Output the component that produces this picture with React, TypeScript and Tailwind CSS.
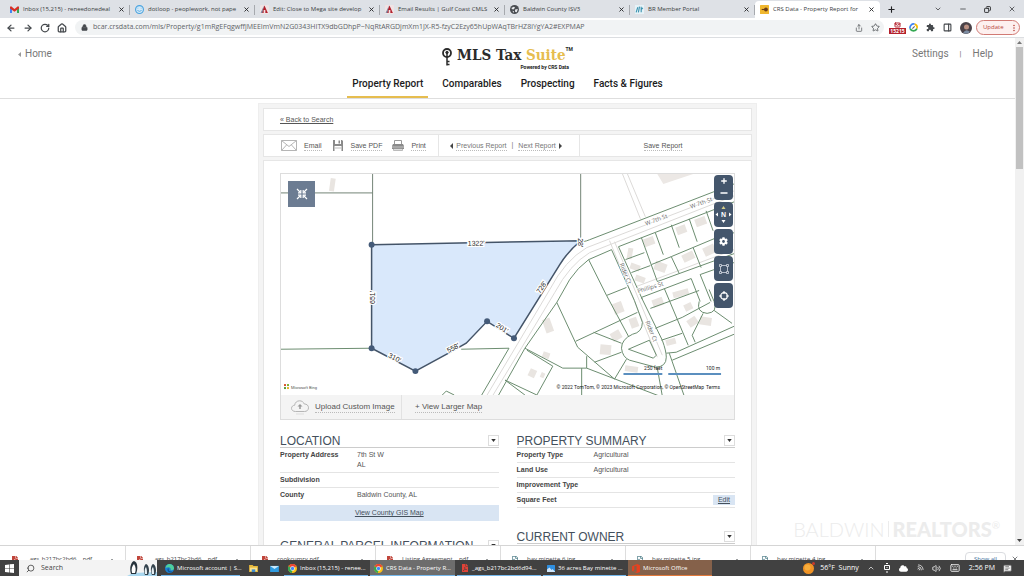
import React from "react";
import {
	ArrowLeft,
	ArrowRight,
	ChevronDown,
	ChevronUp,
	Copy,
	Home,
	Keyboard,
	Lock,
	Mail,
	MessageSquareText,
	Minus,
	PanelRight,
	Plus,
	RotateCw,
	Search,
	Share,
	Star,
	Volume2,
	Wifi,
	X,
} from "lucide-react";
import { FaCloud, FaCog, FaFilePdf, FaRegFileImage } from "react-icons/fa";
import { MdExtension, MdMoreVert } from "react-icons/md";

// ── Types ───────────────────────────────────────────────────────────────────

interface Field {
	label: string;
	lines?: string[];
	edit?: boolean;
}

interface EdgeLabel {
	text: string;
	x: number;
	y: number;
	angle: number;
}

// ── Data ────────────────────────────────────────────────────────────────────

const URL_TEXT =
	"bcar.crsdata.com/mls/Property/g1mRgEFqgwffjMEEImVmN2G0343HITX9dbGDhpP~NqRtARGDjmXm1JX-R5-fzyC2Ezy65hUpWAqTBrHZ8iYgYA2#EXPMAP";

const TABS = [
	{ title: "Inbox (15,215) - reneedonedeal", icon: <GmailIcon /> },
	{ title: "dotloop - peoplework, not pape", icon: <DotloopIcon /> },
	{ title: "Edit: Close to Mega site develop", icon: <MlsIcon /> },
	{ title: "Email Results | Gulf Coast CMLS", icon: <MlsIcon /> },
	{ title: "Baldwin County ISV3", icon: <GlobeIcon /> },
	{ title: "BR Member Portal", icon: <PortalIcon /> },
	{ title: "CRS Data - Property Report for", icon: <CrsIcon />, active: true },
];

const NAV = ["Property Report", "Comparables", "Prospecting", "Facts & Figures"];

const LOCATION: Field[] = [
	{ label: "Property Address", lines: ["7th St W", "AL"] },
	{ label: "Subdivision" },
];

const SUMMARY: Field[] = [
	{ label: "Property Type", lines: ["Agricultural"] },
	{ label: "Land Use", lines: ["Agricultural"] },
	{ label: "Improvement Type" },
	{ label: "Square Feet", edit: true },
];

const DOWNLOADS = [
	{ name: "_ags_b217bc2bd6....pdf", pdf: true },
	{ name: "_ags_b217bc2bd6....pdf", pdf: true },
	{ name: "cookcumry.pdf", pdf: true },
	{ name: "Listing Agreement....pdf", pdf: true },
	{ name: "bay minette 6.jpg", pdf: false },
	{ name: "bay minette 5.jpg", pdf: false },
	{ name: "bay minette 4.jpg", pdf: false },
];

const EDGE_LABELS: EdgeLabel[] = [
	{ text: "1322'", x: 196, y: 70, angle: -1 },
	{ text: "28'", x: 300, y: 69, angle: 90 },
	{ text: "651'", x: 92, y: 124, angle: -90 },
	{ text: "728'", x: 262, y: 114, angle: -57 },
	{ text: "310'", x: 114, y: 185, angle: 27 },
	{ text: "558'", x: 173, y: 175, angle: -28 },
	{ text: "201'", x: 222, y: 155, angle: 32 },
];

const STREET_LABELS: EdgeLabel[] = [
	{ text: "W 7th St", x: 377, y: 46, angle: -20 },
	{ text: "W 7th St", x: 422, y: 29, angle: -20 },
	{ text: "Rider Ct", x: 346, y: 100, angle: 68 },
	{ text: "Phillips St", x: 371, y: 114, angle: -17 },
	{ text: "Rider Ct", x: 372, y: 158, angle: 68 },
];

// corner x, corner y, width, height, angle
const BUILDINGS: number[][] = [
	[50, 4, 5, 13, 8],
	[363, 66, 11, 8, -20],
	[396, 54, 10, 8, -20],
	[415, 46, 11, 8, -20],
	[352, 89, 10, 6, 20],
	[349, 74, 5, 11, 10],
	[377, 87, 12, 9, 20],
	[402, 82, 12, 8, -25],
	[423, 75, 12, 9, -25],
	[357, 101, 10, 6, 20],
	[332, 131, 10, 11, -20],
	[349, 146, 8, 10, -20],
	[330, 161, 10, 9, -30],
	[321, 171, 11, 10, 5],
	[262, 147, 8, 14, -20],
	[264, 178, 7, 6, 20],
	[251, 195, 7, 8, 25],
	[262, 199, 4, 5, 25],
	[393, 119, 16, 6, -15],
	[372, 127, 11, 8, -20],
	[404, 132, 8, 7, -25],
	[407, 148, 10, 8, -35],
	[421, 143, 12, 8, 8],
	[386, 167, 10, 6, -15],
	[346, 192, 13, 6, 8],
];

const LOT_LINES = [
	"M301 67 Q303 69 310 66 L455 10",
	"M0 176 L91 175 M181 176 L229 175 L201 223",
	"M161 223 L166 218 L174 222",
	// main road, east side
	"M332 76 L309 86 Q298 94 290 106 L277 129 L245 175 L218 223",
	"M332 76 L355 127 M309 86 L327 122 L347 114 M327 122 L349 163",
	"M277 129 L298 174 L335 206 M296 168 L358 139",
	"M339 73 L455 28 M339 73 L363 126 M362 64 L378 108 M346 86 L365 79",
	"M352 99 L371 92 M376 59 L384 81 M392 51 L400 74 M410 45 L418 68 M427 37 L434 57",
	"M372 91 L392 83 L435 65 L455 59 M392 83 L400 100 M414 74 L422 94",
	"M378 108 L455 80",
	"M362 124 L412 105 L421 128 M385 115 L409 172 M371 135 L420 117",
	"M376 155 L403 144 L431 129 M382 167 L403 160",
	"M421 101 L455 89 M421 101 L432 128",
	// Rider Ct outline
	"M355 127 L363 149 Q363 159 353 161 Q342 166 342 175 Q343 184 350 187 L376 194 Q387 194 387 184 Q387 178 383 167 L362 124",
	"M349 176 L370 167 L377 182 L374 185 Z",
	"M314 159 L342 170 M315 189 L342 179 M347 186 L335 206",
	"M307 183 V195 M245 175 L283 195 H307 L380 223 M302 195 V223",
	"M247 177 L273 193 L257 222 L225 207 M225 207 L245 222",
	"M387 180 L397 179 L455 153 M393 187 L455 161 M390 180 L405 223 M378 195 L383 223",
	"M420 128 Q417 139 428 140 Q439 139 435 128 L430 116",
	"M424 140 L413 162 L416 169 M435 137 L453 150",
];

// ── Small icons ─────────────────────────────────────────────────────────────

function GmailIcon() {
	return (
		<svg viewBox="0 0 16 12" className="w-[9px] h-[7px] shrink-0">
			<path d="M0 2v10h3.5V5z" fill="#4285f4" />
			<path d="M16 2v10h-3.5V5z" fill="#34a853" />
			<path d="M0 1l2-1 6 5 6-5 2 1v3L8 10 0 4z" fill="#d93025" />
		</svg>
	);
}

function DotloopIcon() {
	return (
		<svg viewBox="0 0 16 16" className="size-[9px] shrink-0">
			<circle cx="8" cy="8" r="7" fill="#d3e9f8" stroke="#4aa3df" strokeWidth="2" />
			<path d="M4.5 9c1 3 6 3 7 0" fill="none" stroke="#4aa3df" strokeWidth="1.5" />
			<path d="M5 5v1M11 5v1" stroke="#4aa3df" strokeWidth="1.5" />
		</svg>
	);
}

function MlsIcon() {
	return (
		<svg viewBox="0 0 16 16" className="size-[9px] shrink-0">
			<rect width="16" height="16" rx="2" fill="#f1e3e4" />
			<path d="M8 1l6 13H9.5V9h-3v5H2z" fill="#b3202c" />
			<path d="M7 1L1 14h3z" fill="#7f8fa8" />
		</svg>
	);
}

function GlobeIcon() {
	return (
		<svg viewBox="0 0 16 16" className="size-[9px] shrink-0">
			<circle cx="8" cy="8" r="8" fill="#4a4d52" />
			<path d="M3 5l4-2 2 2-3 3-3-1zM9 8l5-1-2 6-3-1zM4 10l3 1v3z" fill="#e8eaed" />
		</svg>
	);
}

function PortalIcon() {
	return (
		<svg viewBox="0 0 16 16" className="size-[9px] shrink-0">
			<rect width="16" height="16" fill="#e6f2f7" />
			<path d="M2 13l3-9M6 13l2-10M11 3v10M11 8l3-3" stroke="#3b93b0" strokeWidth="2" />
		</svg>
	);
}

function CrsIcon() {
	return (
		<svg viewBox="0 0 16 16" className="size-[9px] shrink-0">
			<rect width="16" height="16" rx="1" fill="#f0b72f" />
			<path d="M3 8h5" stroke="#6b3d18" strokeWidth="2" />
			<circle cx="10.500" cy="8" r="3.500" fill="#6b3d18" />
		</svg>
	);
}

function ChromeIcon() {
	return (
		<svg viewBox="0 0 16 16" className="size-[9px] shrink-0">
			<circle cx="8" cy="8" r="8" fill="#fbc116" />
			<path d="M8 8L1 4a8 8 0 0 1 14 0z" fill="#ea4335" />
			<path d="M8 8L1 4a8 8 0 0 0 6 12z" fill="#34a853" />
			<circle cx="8" cy="8" r="4" fill="#fff" />
			<circle cx="8" cy="8" r="3" fill="#4285f4" />
		</svg>
	);
}

function EdgeIcon() {
	return (
		<svg viewBox="0 0 16 16" className="size-[9px] shrink-0">
			<circle cx="8" cy="8" r="8" fill="#1b7fd0" />
			<path d="M1 7a7.500 7.500 0 0 1 15 1c0 3-5 4-6 2 1-3-3-6-9-3z" fill="#4fcf9c" />
			<path d="M6 8c-2 3 1 7 6 6" fill="none" stroke="#0c4f91" strokeWidth="2" />
		</svg>
	);
}

function PhotosIcon() {
	return (
		<svg viewBox="0 0 16 14" className="w-2 h-[7px] shrink-0">
			<rect width="16" height="14" rx="1" fill="#2f8fe0" />
			<path d="M0 14V9l5-4 4 5 2-2 5 5v1z" fill="#cfe6fa" />
		</svg>
	);
}

function OfficeIcon() {
	return (
		<svg viewBox="0 0 14 16" className="w-2 h-[9px] shrink-0">
			<path d="M9 0l5 2v12l-5 2-9-3 8 1V3L4 4v7l-4 2V4z" fill="#e8411f" />
		</svg>
	);
}

function KeyIcon() {
	return (
		<svg viewBox="0 0 10 18" className="w-2.5 h-[18px] shrink-0" fill="none" stroke="#2b2b2b">
			<circle cx="5" cy="5" r="4" strokeWidth="1.800" />
			<circle cx="5" cy="4.500" r="1.200" fill="#2b2b2b" />
			<path d="M5 5v12.500M5 13.500h2.500M5 16.500h2.500" strokeWidth="1.500" />
		</svg>
	);
}

function FloppyIcon() {
	return (
		<svg viewBox="0 0 10 11" className="w-2.5 h-[11px] shrink-0">
			<path d="M0 0h9l1 1v10H0z" fill="#8a8a8a" />
			<path d="M2 0h6v4H2z" fill="#fff" />
			<path d="M5.500.5h1.500v3H5.500z" fill="#8a8a8a" />
			<path d="M1.500 6h7v5h-7z" fill="#fff" />
			<path d="M2 8h6" stroke="#bbb" />
		</svg>
	);
}

function PrinterIcon() {
	return (
		<svg viewBox="0 0 12 11" className="w-3 h-[11px] shrink-0">
			<path d="M2.500.5h7v4h-7z" fill="#fff" stroke="#999" />
			<path d="M1 4h10l1 2v3H0V6z" fill="#8a8a8a" />
			<path d="M0 7h12" stroke="#c5c5c5" />
			<path d="M1.500 9h9v1.500h-9z" fill="#fff" stroke="#aaa" strokeWidth=".8" />
		</svg>
	);
}

function CloudIcon() {
	return (
		<svg viewBox="0 0 18 15" className="w-[18px] h-[15px] shrink-0" fill="none" stroke="#b5b5b5">
			<path d="M4.500 11.500C2 11.500.5 10 .5 8.300S2 5.200 3.600 5.300C4 2.500 6 .8 8.500.8c2.300 0 4 1.200 4.800 3.200 2.500-.1 4.200 1.500 4.200 3.800s-1.700 3.700-4 3.700z" />
			<path d="M9 9V6" stroke="#999" strokeWidth="1.500" />
			<path d="M6.500 6.500L9 4l2.500 2.500z" fill="#999" stroke="none" />
			<path d="M5 14h8" stroke="#ddd" />
		</svg>
	);
}

function PenguinArt() {
	return (
		<svg viewBox="0 0 30 16" className="w-[30px] h-4 shrink-0">
			<path d="M0 16l6-3 24-1v4z" fill="#a9d7ef" />
			<path d="M4 14C2 8 4 2 7 1c4 1 4 8 2 13z" fill="#26333c" />
			<path d="M5 13c-1-4 0-7 2-9 2 3 2 6 1 9z" fill="#fff" />
			<path d="M18 15c-2-5-1-10 1-11 3 1 4 7 2 11zM25 15c-2-5-1-10 1-11 3 1 4 7 2 11z" fill="#34434d" />
			<path d="M18 14c-1-3 0-6 1-7 1 2 1 5 1 7zM25 14c-1-3 0-6 1-7 1 2 1 5 1 7z" fill="#e9f1f5" />
		</svg>
	);
}

// ── Browser chrome ──────────────────────────────────────────────────────────

function TabStrip() {
	return (
		<div className="flex items-end h-[18px] shrink-0 bg-[#dee1e6] pl-[5px] text-[6px] text-[#3a3d41]">
			{TABS.map((tab, i) => (
				<div
					key={i}
					className={`flex items-center gap-1 h-[17px] min-w-0 flex-1 max-w-[125px] pl-[5px] ${
						tab.active ? "bg-white rounded-t" : ""
					}`}
				>
					{tab.icon}
					<button type="button" className="flex-1 whitespace-nowrap text-left">
						{tab.title}
					</button>
					<button type="button" aria-label="Close tab">
						<X className="size-[7px] text-[#202124]" strokeWidth={3} />
					</button>
					<span className={`w-px h-2.5 ${tab.active ? "" : "bg-[#a6a9ae]"}`} />
				</div>
			))}
			<button type="button" aria-label="New tab" className="ml-[7px] mb-1">
				<Plus className="size-[9px] text-[#202124]" strokeWidth={3} />
			</button>
			<div className="ml-auto flex items-center gap-[17px] h-full pr-2 text-[#202124]">
				<ChevronDown className="size-2" />
				<button type="button" aria-label="Minimize">
					<Minus className="size-2" />
				</button>
				<button type="button" aria-label="Restore">
					<Copy className="size-[7px] -scale-x-100" strokeWidth={3} />
				</button>
				<button type="button" aria-label="Close">
					<X className="size-2" />
				</button>
			</div>
		</div>
	);
}

function Toolbar() {
	return (
		<div className="flex items-center h-5 shrink-0 bg-white border-b border-[#dcdee1] pl-1.5 pr-1 text-[#45494d]">
			<div className="flex items-center gap-[7px]">
				<button type="button" aria-label="Back"><ArrowLeft className="size-2.5" strokeWidth={3} /></button>
				<button type="button" aria-label="Forward"><ArrowRight className="size-2.5" strokeWidth={3} /></button>
				<button type="button" aria-label="Reload"><RotateCw className="size-2.5" strokeWidth={3} /></button>
				<button type="button" aria-label="Home page"><Home className="size-2.5" strokeWidth={3} /></button>
			</div>
			<div className="flex items-center flex-1 h-[15px] ml-2 rounded-full bg-[#f1f3f4] pl-1.5 pr-1">
				<Lock className="size-[7px] mr-1 shrink-0" fill="currentColor" />
				<input
					aria-label="Address"
					defaultValue={URL_TEXT}
					className="flex-1 min-w-0 bg-transparent text-[7px] text-[#5f6368] ml-px outline-none"
				/>
				<Share className="size-2 ml-2" />
				<Star className="size-[9px] ml-2" />
			</div>
			<div className="flex items-center gap-2 ml-1.5">
				<span className="flex flex-col items-center w-[15px] -mr-1">
					<Mail className="w-[9px] h-1.5 text-[#b3202c]" strokeWidth={4} />
					<span className="bg-[#b3202c] text-white text-[5px] font-bold leading-[6px] px-px">15215</span>
				</span>
				<svg viewBox="0 0 16 16" className="size-[9px]" fill="none" strokeWidth="3">
					<path d="M2 10a6.500 6.500 0 0 1 8-8" stroke="#4285f4" />
					<path d="M10 2a6.500 6.500 0 0 1 4 8" stroke="#fbbc04" />
					<path d="M14 10a6.500 6.500 0 0 1-12 0" stroke="#34a853" />
					<path d="M6 10l4-4" stroke="#5f6368" strokeWidth="2" />
				</svg>
				<MdExtension className="size-[9px]" />
				<PanelRight className="size-[9px]" strokeWidth={3} />
				<svg viewBox="0 0 12 12" className="size-3">
					<circle cx="6" cy="6" r="6" fill="#4a4248" />
					<circle cx="6.500" cy="5" r="2.500" fill="#bb9183" />
					<path d="M3 11q3-5 7-1-3 3-7 1z" fill="#7d8da3" />
				</svg>
				<button
					type="button"
					className="flex items-center justify-between w-11 h-[15px] -ml-1 pl-1.5 rounded-full border border-[#d17a74] bg-[#fdf0ef] text-[6px] text-[#b8453c]"
				>
					Update
					<MdMoreVert className="size-2.5" />
				</button>
			</div>
		</div>
	);
}

// ── Site header ─────────────────────────────────────────────────────────────

function SiteHeader() {
	return (
		<header className="h-[61px] border-b border-[#dedede] font-[Roboto,sans-serif]">
			<div className="grid grid-cols-[1fr_auto_1fr] items-start pt-[7px] px-[18px] h-8">
				<a href="#home" className="flex items-center gap-1 pt-0.5 text-[10px] leading-[14px] text-[#777]">
					<svg viewBox="0 0 3 5" className="w-[3px] h-[5px]">
						<path d="M3 0L0 2.500 3 5z" fill="#999" />
					</svg>
					Home
				</a>
				<div className="flex items-start gap-[5px]">
					<div className="pt-[3px]"><KeyIcon /></div>
					<div>
						<div className="flex items-start text-[15px] leading-5 font-bold text-[#2b2b2b] font-['DejaVu_Serif_Condensed','DejaVu_Serif',serif]">
							<span>MLS Tax&nbsp;</span>
							<span className="text-[#e6bd4f]">Suite</span>
							<span className="text-[5px] leading-[9px] font-[Roboto,sans-serif]">TM</span>
						</div>
						<div className="text-[5px] leading-[5px] font-bold text-[#222] text-right pr-1">
							Powered by CRS Data
						</div>
					</div>
				</div>
				<div className="flex justify-end gap-[11px] pt-0.5 pr-1 text-[10px] leading-[14px] text-[#777]">
					<a href="#settings">Settings</a>
					<span className="text-[8px]">|</span>
					<a href="#help">Help</a>
				</div>
			</div>
			<nav className="flex justify-center gap-[9px] text-[10px] font-medium text-[#1c1c1c]">
				{NAV.map((item, i) => (
					<a
						key={item}
						href={`#${i}`}
						className={`px-[5px] pt-1.5 h-7 border-b-2 ${i === 0 ? "border-[#e6bd4f]" : "border-transparent"}`}
					>
						{item}
					</a>
				))}
			</nav>
		</header>
	);
}

// ── Map ─────────────────────────────────────────────────────────────────────

function ParcelMap() {
	return (
		<svg viewBox="0 0 455 222" className="block w-full bg-white" role="img" aria-label="Parcel map">
			{/* buildings */}
			<path d="M378 0h36l-30 10z" fill="#ece8e5" />
			{BUILDINGS.map(([x, y, w, h, a], i) => (
				<rect key={i} width={w} height={h} fill="#e9e5e1" transform={`translate(${x} ${y}) rotate(${a})`} />
			))}
			{/* road casings */}
			<g fill="none" stroke="#dcdad8" strokeWidth="1">
				<path d="M207 222 L238 170 L270 116 Q285 87 307 74 L455 17" />
				<path d="M213 222 L242 174 L275 119 Q290 91 310 79 L455 22" />
				<path d="M343 0 L361 45 M348 0 L366 43" />
				<path d="M330 67 L378 184 M335 68 L383 182" />
				<path d="M357 113 L455 76" />
			</g>
			{/* lot lines */}
			<g fill="none" stroke="#6b8c6f" strokeWidth="1">
				{LOT_LINES.map((d) => (
					<path key={d} d={d} />
				))}
			</g>
			<path d="M92 0V71M301 0V67M0 19H92" stroke="#738476" strokeWidth="1" />
			{/* subject parcel */}
			<path
				d="M91 71 L301 67 Q288 78 280 91 L234 165 L207 148 L186 170 L172 178 L135 198 L91 175 Z"
				fill="#d9e8fb"
				stroke="#445468"
				strokeWidth="1.500"
			/>
			{[[91, 71], [91, 175], [135, 198], [207, 148], [234, 165]].map(([x, y]) => (
				<circle key={`${x}-${y}`} cx={x} cy={y} r="3" fill="#445a78" />
			))}
			<g
				fontFamily="Liberation Sans, sans-serif"
				fontSize="7"
				textAnchor="middle"
				fill="#222"
				stroke="#fff"
				strokeWidth="2.500"
				paintOrder="stroke"
			>
				{EDGE_LABELS.map((l) => (
					<text key={l.text} dy="2" transform={`translate(${l.x} ${l.y}) rotate(${l.angle})`}>
						{l.text}
					</text>
				))}
			</g>
			<g
				fontFamily="Open Sans, sans-serif"
				fontSize="6"
				textAnchor="middle"
				fill="#666"
				stroke="#fff"
				strokeWidth="1.500"
				paintOrder="stroke"
			>
				{STREET_LABELS.map((l, i) => (
					<text key={i} dy="2" transform={`translate(${l.x} ${l.y}) rotate(${l.angle})`}>
						{l.text}
					</text>
				))}
			</g>
			{/* scale and credits */}
			<path d="M344 201H383M389 201H442" stroke="#5b8fbf" strokeWidth="2" />
			<g fontFamily="Roboto, sans-serif" fontSize="5" fill="#222">
				<text x="383" y="197" textAnchor="end">250 feet</text>
				<text x="441" y="197" textAnchor="end">100 m</text>
				<text x="425" y="216" textAnchor="end">
					© 2022 TomTom, © 2023 Microsoft Corporation, © OpenStreetMap
				</text>
				<text x="441" y="216" textAnchor="end">Terms</text>
				<text x="10" y="216" fontSize="4" fill="#555">Microsoft Bing</text>
			</g>
			<path d="M3 211h2v2H3z" fill="#d9532c" />
			<path d="M6 211h2v2H6z" fill="#7fae2f" />
			<path d="M3 214h2v2H3z" fill="#5a9a3a" />
			<path d="M6 214h2v2H6z" fill="#e5b52b" />
		</svg>
	);
}

function MapControls() {
	const tile = "flex items-center justify-center w-[19px] h-[25px] rounded-sm bg-[#44566c] text-white";
	return (
		<div className="absolute top-px right-px flex flex-col gap-0.5">
			<div className={`${tile} flex-col gap-[3px]`}>
				<button type="button" aria-label="Zoom in"><Plus className="size-2" strokeWidth={4} /></button>
				<button type="button" aria-label="Zoom out"><Minus className="size-2.5" strokeWidth={4} /></button>
			</div>
			<button type="button" aria-label="Pan" className={tile}>
				<svg viewBox="0 0 19 25" className="w-[19px] h-[25px]">
					<path d="M7.500 7l2-3 2 3z" fill="#d8cf8a" />
					<path d="M7.500 18l2 3 2-3zM4 10.500l-2.500 2 2.500 2zM15 10.500l2.500 2-2.500 2z" fill="#fff" />
					<text x="9.500" y="15" fontSize="7" fontWeight="700" fontFamily="Liberation Sans, sans-serif" textAnchor="middle" fill="#fff">N</text>
				</svg>
			</button>
			<button type="button" aria-label="Map settings" className={tile}><FaCog className="size-[9px]" /></button>
			<button type="button" aria-label="Draw shape" className={tile}>
				<svg viewBox="0 0 10 10" className="size-2.5" fill="none" stroke="#d5dbe3" strokeWidth=".8">
					<path d="M2.500 1.500h5M2.500 8.500h5M1.500 2.500v5M8.500 2.500v5" />
					<path d="M.5.5h2v2h-2zM7.500.5h2v2h-2zM.5 7.500h2v2h-2zM7.500 7.500h2v2h-2z" />
				</svg>
			</button>
			<button type="button" aria-label="Center map" className={tile}>
				<svg viewBox="0 0 10 10" className="size-2.5" fill="none" stroke="#fff" strokeWidth="1.200">
					<circle cx="5" cy="5" r="3.300" />
					<path d="M5 0v3M5 7v3M0 5h3M7 5h3" />
				</svg>
			</button>
		</div>
	);
}

// ── Report ──────────────────────────────────────────────────────────────────

function ReportBar() {
	const link = "border-b border-dotted border-[#bbb] leading-[9px]";
	return (
		<div className="flex h-[23px] bg-white border border-[#e6e6e6] text-[7px] text-[#555]">
			<div className="flex items-center w-[175px] pl-[17px] border-r border-[#e6e6e6]">
				<svg viewBox="0 0 16 11" className="w-4 h-[11px] mr-[7px]" fill="none" stroke="#b5b5b5">
					<path d="M.5.5h15v10H.5zM.5.5L8 6.500 15.500.5M.5 10.500L5.500 5M15.500 10.500L10.500 5" />
				</svg>
				<button type="button" className={`${link} mr-[11px]`}>Email</button>
				<FloppyIcon />
				<button type="button" className={`${link} ml-2 mr-2.5`}>Save PDF</button>
				<PrinterIcon />
				<button type="button" className={`${link} ml-[7px]`}>Print</button>
			</div>
			<div className="flex items-center justify-center gap-1 w-[141px] pr-1.5 border-r border-[#e6e6e6] text-[#777]">
				<button type="button" className="flex items-center gap-[3px]">
					<svg viewBox="0 0 3 6" className="w-[3px] h-1.5"><path d="M3 0L0 3l3 3z" fill="#444" /></svg>
					<span className={link}>Previous Report</span>
				</button>
				<span className="px-px">|</span>
				<button type="button" className="flex items-center gap-[3px]">
					<span className={link}>Next Report</span>
					<svg viewBox="0 0 3 6" className="w-[3px] h-1.5"><path d="M0 0l3 3-3 3z" fill="#444" /></svg>
				</button>
			</div>
			<div className="flex flex-1 items-center justify-center pr-[5px]">
				<button type="button" className={link}>Save Report</button>
			</div>
		</div>
	);
}

function SectionHeading({ title }: { title: string }) {
	return (
		<div className="flex items-center justify-between h-3.5 border-b border-[#ccc]">
			<h2 className="text-[12px] leading-[14px] text-[#44505c]">{title}</h2>
			<button
				type="button"
				aria-label={`Toggle ${title}`}
				className="flex items-center justify-center size-[11px] border border-[#ddd] bg-white"
			>
				<svg viewBox="0 0 6 4" className="w-[5px] h-[3px]"><path d="M0 0h6L3 4z" fill="#333" /></svg>
			</button>
		</div>
	);
}

function FieldRow({ field }: { field: Field }) {
	return (
		<div className="flex border-b border-[#e4e4e4] py-0.5 text-[7px] leading-[10px] text-[#555]">
			<dt className="w-[77px] shrink-0 font-bold text-[#444]">{field.label}</dt>
			<dd className="flex-1">
				{field.lines?.map((line) => <div key={line}>{line}</div>)}
			</dd>
			{field.edit && (
				<button type="button" className="px-[5px] bg-[#d9e5f3] underline text-[#44505c]">
					Edit
				</button>
			)}
		</div>
	);
}

function Report() {
	return (
		<main className="w-[499px] max-w-full mx-auto mt-1 p-1 flex flex-col gap-[3px] bg-[#f4f4f4] border-x border-t border-[#eee] font-['Liberation_Sans',Arial,sans-serif]">
			<div className="flex items-center h-[23px] pt-px pl-4 bg-white border border-[#e6e6e6]">
				<a href="#search" className="text-[7px] underline text-[#555]">« Back to Search</a>
			</div>
			<ReportBar />
			<div className="bg-white border border-[#e6e6e6] px-4 pt-3 pb-10">
				<div className="relative border border-[#ddd] bg-[#f4f4f4]">
					<ParcelMap />
					<button
						type="button"
						aria-label="Shrink map"
						className="absolute top-[7px] left-[7px] flex items-center justify-center w-[27px] h-[26px] bg-[#6c7c92] text-white"
					>
						<svg viewBox="0 0 12 12" className="size-3" fill="none" stroke="#fff" strokeWidth="1.200">
							<path d="M1 1l3.500 3.500M11 1L7.500 4.500M1 11l3.500-3.500M11 11L7.500 7.500" />
							<path d="M4.800 2v2.800H2M7.200 2v2.800H10M4.800 10V7.200H2M7.200 10V7.200H10" />
						</svg>
					</button>
					<MapControls />
					<div className="flex items-center h-6 text-[8px] text-[#555]">
						<div className="flex items-center gap-1.5 w-[121px] h-full pl-2.5 border-r border-[#e2e2e2]">
							<CloudIcon />
							<button type="button" className="whitespace-nowrap border-b border-dotted border-[#bbb] leading-[10px]">
								Upload Custom Image
							</button>
						</div>
						<button type="button" className="ml-[13px] border-b border-dotted border-[#bbb] leading-[10px]">
							+ View Larger Map
						</button>
					</div>
				</div>
				<div className="grid grid-cols-2 gap-[18px] pt-3.5">
					<section>
						<SectionHeading title="LOCATION" />
						<dl>
							{LOCATION.map((f) => <FieldRow key={f.label} field={f} />)}
							<div className="flex pt-0.5 pb-[5px] text-[7px] leading-[10px] text-[#555]">
								<dt className="w-[77px] font-bold text-[#444]">County</dt>
								<dd>Baldwin County, AL</dd>
							</div>
						</dl>
						<a href="#gis" className="block mb-[18px] bg-[#d9e5f3] text-center text-[7px] leading-4 underline text-[#44505c]">
							View County GIS Map
						</a>
						<SectionHeading title="GENERAL PARCEL INFORMATION" />
					</section>
					<section>
						<SectionHeading title="PROPERTY SUMMARY" />
						<dl className="mb-[22px]">
							{SUMMARY.map((f) => <FieldRow key={f.label} field={f} />)}
						</dl>
						<SectionHeading title="CURRENT OWNER" />
					</section>
				</div>
			</div>
		</main>
	);
}

// ── Bottom bars ─────────────────────────────────────────────────────────────

function DownloadsBar() {
	return (
		<div className="flex h-[15px] shrink-0 overflow-hidden bg-white border-t border-[#d5d5d5] pl-px text-[6px] text-[#3c4043]">
			{DOWNLOADS.map((d, i) => (
				<div key={i} className="flex items-start gap-2 flex-1 max-w-[125px] min-w-0 h-full pt-2 pl-2.5 pr-2.5 border-r border-[#ddd]">
					{d.pdf ? (
						<FaFilePdf className="size-2 mt-0.5 shrink-0 text-[#c0453b]" />
					) : (
						<FaRegFileImage className="size-2 mt-0.5 shrink-0 text-[#5b8791]" />
					)}
					<span className="flex-1 whitespace-nowrap leading-[10px]">{d.name}</span>
					<ChevronUp className="size-1.5 mt-[3px] shrink-0" strokeWidth={3} />
				</div>
			))}
			<div className="ml-auto flex items-start gap-[5px] pt-1.5 pr-[5px]">
				<button type="button" className="w-[41px] h-[15px] border border-[#dadce0] rounded-sm text-[#3b6f9c]">
					Show all
				</button>
				<button type="button" aria-label="Close downloads" className="pt-[3px]">
					<X className="size-2" />
				</button>
			</div>
		</div>
	);
}

function TaskButton({ icon, label, tone }: { icon: React.ReactNode; label: string; tone: string }) {
	return (
		<button
			type="button"
			className={`flex items-center gap-[3px] h-full pl-1 pt-px border-b whitespace-nowrap text-[6px] ${tone}`}
		>
			{icon}
			{label}
		</button>
	);
}

function Taskbar() {
	return (
		<div className="flex items-center h-4 shrink-0 bg-[#414141] text-white text-[7px]">
			<button type="button" aria-label="Start" className="flex items-center justify-center w-[19px] h-full">
				<svg viewBox="0 0 9 9" className="size-[9px]" fill="#fff">
					<path d="M0 1l4-.6v3.800H0zM4.600.3L9 0v4.200H4.600zM0 4.800h4v3.800L0 8zM4.600 4.800H9V9l-4.400-.4z" />
				</svg>
			</button>
			<label className="flex items-center w-[138px] h-full pl-[7px] bg-[#f3f3f3] text-[#333]">
				<Search className="size-[9px] mr-1.5 shrink-0 -scale-x-100" />
				<input aria-label="Search" placeholder="Search" className="flex-1 min-w-0 text-[7px] outline-none placeholder:text-[#444]" />
				<PenguinArt />
			</label>
			<div className="flex items-center h-full pl-1 gap-0.5">
				<TaskButton icon={<EdgeIcon />} label="Microsoft account | S..." tone="w-[79px] border-[#76b9ed]" />
				<button type="button" aria-label="File Explorer" className="w-[22px] flex justify-center">
					<svg viewBox="0 0 10 8" className="w-[9px] h-[7px]">
						<path d="M0 0h4l1 1h5v7H0z" fill="#e8b93c" />
						<path d="M1 3h8v4H1z" fill="#fbe28d" />
						<path d="M3 5h4v3H3z" fill="#3e8ccf" />
					</svg>
				</button>
				<button type="button" aria-label="Mail" className="w-4 flex justify-center">
					<svg viewBox="0 0 10 8" className="w-[9px] h-[7px]">
						<path d="M0 1h10v7H0z" fill="#2f9be0" />
						<path d="M0 1l5 3.500L10 1z" fill="#c9e9fb" />
					</svg>
				</button>
				<TaskButton icon={<ChromeIcon />} label="Inbox (15,215) - renee..." tone="w-[84px] border-[#76b9ed]" />
				<TaskButton icon={<ChromeIcon />} label="CRS Data - Property R..." tone="w-[85px] bg-[#6d6d6d] border-[#76b9ed]" />
				<TaskButton
					icon={<FaFilePdf className="size-2 shrink-0 text-[#e04338]" />}
					label="_ags_b217bc2bd6d94..."
					tone="w-[84px] border-[#76b9ed]"
				/>
				<TaskButton icon={<PhotosIcon />} label="36 acres Bay minette ..." tone="w-[83px] border-[#76b9ed]" />
				<TaskButton icon={<OfficeIcon />} label="Microsoft Office" tone="w-[84px] bg-[#85614a] border-[#e2793b]" />
			</div>
			<div className="ml-auto flex items-center gap-2 pr-3">
				<span className="flex items-center gap-[5px]">
					<svg viewBox="0 0 12 12" className="size-3">
						<circle cx="5.500" cy="6.500" r="5.500" fill="#f09325" />
						<circle cx="4.500" cy="5.500" r="3" fill="#f8ae3c" />
						<circle cx="10.500" cy="1.500" r="1.500" fill="#c93a2c" />
					</svg>
					56°F&nbsp; Sunny
				</span>
				<ChevronUp className="size-2" />
				<svg viewBox="0 0 8 10" className="w-2 h-2.5" fill="none" stroke="#fff">
					<path d="M1.500 2.500h5v4h-5zM3 .5h2M3 9h2M4 4v1" />
				</svg>
				<FaCloud className="size-[9px]" />
				<Wifi className="size-2 rotate-45" />
				<Volume2 className="size-[9px]" />
				<Keyboard className="w-3 h-2.5" />
				<span>2:56 PM</span>
				<MessageSquareText className="size-[9px]" fill="#fff" stroke="#666" />
			</div>
		</div>
	);
}

// ── Page ────────────────────────────────────────────────────────────────────

export default function App() {
	return (
		<div className="flex flex-col h-screen overflow-hidden bg-white font-['Open_Sans','Noto_Sans',sans-serif]">
			<TabStrip />
			<Toolbar />
			<div className="relative flex flex-1 min-h-0">
				<div className="flex-1 min-w-0 overflow-hidden">
					<SiteHeader />
					<Report />
				</div>
				{/* scrollbar */}
				<div className="flex flex-col items-center justify-between w-[9px] py-[3px] bg-[#f1f1f1]">
					<div className="flex flex-col items-center gap-[3px] w-full">
						<svg viewBox="0 0 5 3" className="w-[5px] h-[3px]"><path d="M0 3h5L2.500 0z" fill="#777" /></svg>
						<div className="w-[7px] h-[122px] bg-[#c1c1c1]" />
					</div>
					<svg viewBox="0 0 5 3" className="w-[5px] h-[3px]"><path d="M0 0h5L2.500 3z" fill="#444" /></svg>
				</div>
				<div className="absolute right-6 bottom-1 flex items-center text-[20px] leading-6 text-[#ececec] font-[Lato,sans-serif]">
					<span className="font-light pr-[3px]">BALDWIN</span>
					<span className="w-px h-4 bg-[#ececec]" />
					<span className="font-black pl-1">REALTORS</span>
					<span className="text-[10px] leading-3 self-start pt-0.5">®</span>
				</div>
			</div>
			<DownloadsBar />
			<Taskbar />
		</div>
	);
}
